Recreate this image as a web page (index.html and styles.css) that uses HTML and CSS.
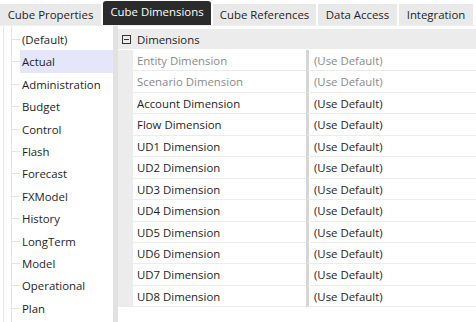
FILE: index.html
```
<!DOCTYPE html>
<html>
<head>
<meta charset="utf-8">
<link rel="stylesheet" href="styles.css">
</head>
<body>
<div class="app">
  <div class="tabs">
    <div class="tab t1">Cube Properties</div>
    <div class="tab active t2">Cube Dimensions</div>
    <div class="tab t3">Cube References</div>
    <div class="tab t4">Data Access</div>
    <div class="tab t5">Integration</div>
  </div>
  <div class="main">
    <div class="tree">
      <div class="item">(Default)</div>
      <div class="item selected">Actual</div>
      <div class="item">Administration</div>
      <div class="item">Budget</div>
      <div class="item">Control</div>
      <div class="item">Flash</div>
      <div class="item">Forecast</div>
      <div class="item">FXModel</div>
      <div class="item">History</div>
      <div class="item">LongTerm</div>
      <div class="item">Model</div>
      <div class="item">Operational</div>
      <div class="item">Plan</div>
    </div>
    <div class="splitter"></div>
    <div class="grid">
      <div class="cat">
        <span class="toggle"><svg width="9" height="9" viewBox="0 0 9 9"><rect x="0.5" y="0.5" width="8" height="8" fill="none" stroke="#333" stroke-width="1"/><line x1="2" y1="4.5" x2="7" y2="4.5" stroke="#333" stroke-width="1"/></svg></span>
        <span class="cat-label">Dimensions</span>
      </div>
      <div class="row dim"><div class="name">Entity Dimension</div><div class="value">(Use Default)</div></div>
      <div class="row dim"><div class="name">Scenario Dimension</div><div class="value">(Use Default)</div></div>
      <div class="row"><div class="name">Account Dimension</div><div class="value">(Use Default)</div></div>
      <div class="row"><div class="name">Flow Dimension</div><div class="value">(Use Default)</div></div>
      <div class="row"><div class="name">UD1 Dimension</div><div class="value">(Use Default)</div></div>
      <div class="row"><div class="name">UD2 Dimension</div><div class="value">(Use Default)</div></div>
      <div class="row"><div class="name">UD3 Dimension</div><div class="value">(Use Default)</div></div>
      <div class="row"><div class="name">UD4 Dimension</div><div class="value">(Use Default)</div></div>
      <div class="row"><div class="name">UD5 Dimension</div><div class="value">(Use Default)</div></div>
      <div class="row"><div class="name">UD6 Dimension</div><div class="value">(Use Default)</div></div>
      <div class="row"><div class="name">UD7 Dimension</div><div class="value">(Use Default)</div></div>
      <div class="row"><div class="name">UD8 Dimension</div><div class="value">(Use Default)</div></div>
    </div>
  </div>
</div>
</body>
</html>
```
FILE: styles.css
```
* { box-sizing: border-box; }
html, body { margin: 0; padding: 0; background: #fff; }
body {
  width: 476px;
  height: 322px;
  overflow: hidden;
  font-family: "Open Sans", "Noto Sans", sans-serif;
  font-size: 11.4px;
  color: #1e1e1e;
}
.app { display: flex; flex-direction: column; height: 322px; }
.tabs {
  display: flex;
  align-items: flex-end;
  gap: 2px;
  height: 25px;
  flex: none;
}
.tab {
  height: 21px;
  line-height: 21px;
  background: #e9e9e9;
  color: #1e1e1e;
  text-align: center;
  white-space: nowrap;
}
.t1 { width: 101px; }
.t2 { width: 108px; }
.t3 { width: 103px; }
.t4 { width: 79px; }
.t5 { width: 74px; }
.tab.active {
  height: 24px;
  line-height: 22px;
  background: #2b2b2b;
  color: #fff;
  border-radius: 3px 3px 0 0;
}
.main {
  flex: 1;
  display: flex;
  border-top: 1px solid #f0f0f0;
  min-height: 0;
}
.tree {
  width: 110px;
  margin-left: 3px;
  border-left: 1px solid #e6e6e6;
  padding-top: 2px;
  padding-left: 16px;
  position: relative;
  background: #fff;
}
.tree::before {
  content: "";
  position: absolute;
  left: 7px;
  top: 0;
  bottom: 0;
  border-left: 1px solid #e4e4e4;
}
.item {
  height: 22.4px;
  line-height: 23px;
  padding-left: 2px;
  position: relative;
  white-space: nowrap;
}
.item::before {
  content: "";
  position: absolute;
  left: -9px;
  top: 11px;
  width: 9px;
  border-top: 1px solid #e4e4e4;
}
.item.selected { background: #e6e6fa; }
.splitter {
  width: 5px;
  background: #e2e2e2;
  flex: none;
}
.grid {
  flex: 1;
  padding-top: 3px;
  background: #fff;
}
.cat {
  height: 21px;
  background: #ececec;
  display: flex;
  align-items: center;
  padding-left: 4px;
  border-bottom: 1px solid #fff;
}
.toggle { display: flex; width: 9px; height: 9px; margin-right: 6px; }
.cat-label { color: #1e1e1e; }
.row {
  display: flex;
  height: 21.45px;
  background: #ececec;
  padding-left: 15px;
}
.row .name {
  width: 173px;
  padding-left: 4px;
  padding-top: 1px;
  background: #fff;
  border-bottom: 1px solid #ececec;
  line-height: 20px;
  white-space: nowrap;
}
.row .value {
  flex: 1;
  background: #fff;
  border-left: 3px solid #d6d6d6;
  border-bottom: 1px solid #ececec;
  padding-left: 5px;
  padding-top: 1px;
  line-height: 20px;
  white-space: nowrap;
}
.row.dim .name, .row.dim .value { color: #8a8a8a; }
```
